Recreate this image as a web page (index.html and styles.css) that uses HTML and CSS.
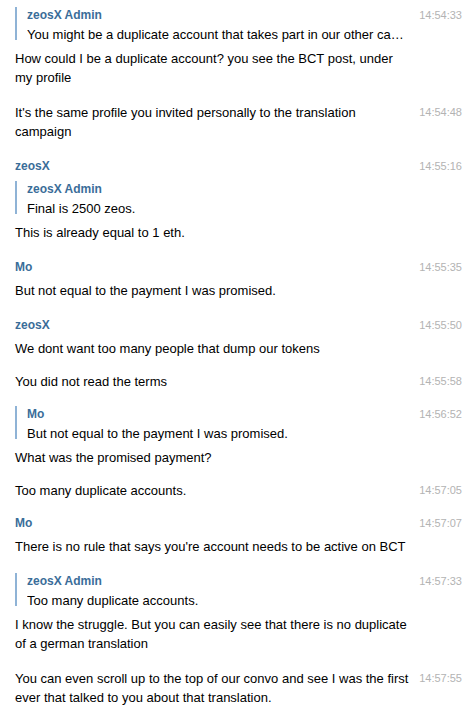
FILE: index.html
```html
<!DOCTYPE html>
<html lang="en">
<head>
<meta charset="utf-8">
<title>Chat</title>
<link rel="stylesheet" href="styles.css">
</head>
<body>
<div class="chat">
  <div class="msg">
    <div class="content">
      <div class="quote">
        <div class="qname">zeosX Admin</div>
        <div class="qtext">You might be a duplicate account that takes part in our other campaigns as well</div>
      </div>
      <div class="text">How could I be a duplicate account? you see the BCT post, under my profile</div>
    </div>
    <div class="time">14:54:33</div>
  </div>

  <div class="msg">
    <div class="content">
      <div class="text">It's the same profile you invited personally to the translation campaign</div>
    </div>
    <div class="time">14:54:48</div>
  </div>

  <div class="msg">
    <div class="content">
      <div class="name">zeosX</div>
      <div class="quote">
        <div class="qname">zeosX Admin</div>
        <div class="qtext">Final is 2500 zeos.</div>
      </div>
      <div class="text">This is already equal to 1 eth.</div>
    </div>
    <div class="time">14:55:16</div>
  </div>

  <div class="msg">
    <div class="content">
      <div class="name">Mo</div>
      <div class="text">But not equal to the payment I was promised.</div>
    </div>
    <div class="time">14:55:35</div>
  </div>

  <div class="msg">
    <div class="content">
      <div class="name">zeosX</div>
      <div class="text">We dont want too many people that dump our tokens</div>
    </div>
    <div class="time">14:55:50</div>
  </div>

  <div class="msg msg-tight">
    <div class="content">
      <div class="text">You did not read the terms</div>
    </div>
    <div class="time">14:55:58</div>
  </div>

  <div class="msg msg-tight">
    <div class="content">
      <div class="quote">
        <div class="qname">Mo</div>
        <div class="qtext">But not equal to the payment I was promised.</div>
      </div>
      <div class="text">What was the promised payment?</div>
    </div>
    <div class="time">14:56:52</div>
  </div>

  <div class="msg msg-tight">
    <div class="content">
      <div class="text">Too many duplicate accounts.</div>
    </div>
    <div class="time">14:57:05</div>
  </div>

  <div class="msg msg-tight">
    <div class="content">
      <div class="name">Mo</div>
      <div class="text">There is no rule that says you're account needs to be active on BCT</div>
    </div>
    <div class="time">14:57:07</div>
  </div>

  <div class="msg">
    <div class="content">
      <div class="quote">
        <div class="qname">zeosX Admin</div>
        <div class="qtext">Too many duplicate accounts.</div>
      </div>
      <div class="text">I know the struggle. But you can easily see that there is no duplicate of a german translation</div>
    </div>
    <div class="time">14:57:33</div>
  </div>

  <div class="msg">
    <div class="content">
      <div class="text">You can even scroll up to the top of our convo and see I was the first ever that talked to you about that translation.</div>
    </div>
    <div class="time">14:57:55</div>
  </div>
</div>
</body>
</html>
```

FILE: styles.css
```css
html, body {
  margin: 0;
  padding: 0;
  background: #ffffff;
}

body {
  font-family: "Liberation Sans", Arial, sans-serif;
  font-size: 13px;
  line-height: 19px;
  color: #000000;
}

.chat {
  display: flex;
  flex-direction: column;
  gap: 16px;
  padding: 6px 12px 20px 15px;
}

.msg {
  display: flex;
  align-items: flex-start;
}

.msg-tight {
  margin-top: -2px;
}

.content {
  flex: 1;
  min-width: 0;
}

.time {
  flex: none;
  margin-left: 9px;
  font-size: 11px;
  line-height: 19px;
  color: #b3b3b3;
  text-align: right;
}

.name {
  font-size: 12px;
  font-weight: bold;
  color: #3a6d99;
  line-height: 19px;
  margin-bottom: 4px;
}

.quote {
  padding-left: 12px;
  margin-bottom: 5px;
  background: linear-gradient(#8fb3d6, #8fb3d6) no-repeat 0 1px / 2px 33px;
}

.qname {
  font-size: 12px;
  font-weight: bold;
  color: #3a6d99;
  line-height: 19px;
}

.qtext {
  line-height: 19px;
  white-space: nowrap;
  overflow: hidden;
  text-overflow: ellipsis;
}

.text {
  line-height: 19px;
}
```
